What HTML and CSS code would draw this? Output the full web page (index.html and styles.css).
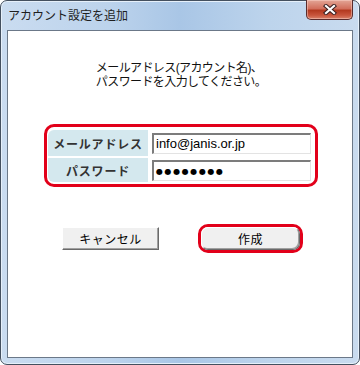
FILE: index.html
```html
<!DOCTYPE HTML>
<html>

<head>
    <meta charset="utf-8">
    <title>アカウント設定を追加</title>
    <link rel="stylesheet" href="styles.css">
</head>

<body>
<div class="window">
    <div class="titlebar">
        <span class="title">アカウント設定を追加</span>
        <a href="javascript:;" class="close">
            <svg width="14" height="11" viewBox="0 0 14 11">
                <path d="M3 2 L11 9 M11 2 L3 9" stroke="#3a2020" stroke-width="4.2" stroke-linecap="square"/>
                <path d="M3 2 L11 9 M11 2 L3 9" stroke="#fff" stroke-width="2.2" stroke-linecap="square"/>
            </svg>
        </a>
    </div>
    <div class="client">
        <p class="lead">メールアドレス(アカウント名)、<br>パスワードを入力してください。</p>

        <div class="account-box">
            <div class="row">
                <label class="cell-label">メールアドレス</label>
                <div class="cell-value">
                    <span class="field">info@janis.or.jp</span>
                </div>
            </div>
            <div class="row">
                <label class="cell-label">パスワード</label>
                <div class="cell-value">
                    <span class="field"><span class="dots">●●●●●●●●</span></span>
                </div>
            </div>
        </div>

        <div class="buttons">
            <button class="btn btn-cancel">キャンセル</button>
            <span class="ring">
                <button class="btn btn-create">作成</button>
            </span>
        </div>
    </div>
</div>
</body>

</html>
```

FILE: styles.css
```css
* {
    margin: 0;
    padding: 0;
    box-sizing: border-box;
}

html, body {
    width: 360px;
    height: 365px;
    background: #fff;
    overflow: hidden;
}

body {
    font-family: "Noto Sans CJK JP", "Liberation Sans", sans-serif;
    font-size: 12px;
    color: #000;
}

.window {
    width: 360px;
    height: 365px;
    display: flex;
    flex-direction: column;
    border: 1px solid #44505f;
    border-radius: 7px;
    background: linear-gradient(90deg, #cadcf0 0%, #bcd3ec 30%, #a9c6e6 50%, #bdd4ec 75%, #c9dbef 100%);
    padding: 0 6px 6px 6px;
    box-shadow: inset 0 0 0 1px #e6f0fa;
}

.titlebar {
    height: 29px;
    display: flex;
    justify-content: space-between;
    align-items: flex-start;
}

.title {
    font-size: 12px;
    line-height: 14px;
    color: #1e1e1e;
    margin-top: 7px;
    margin-left: 1px;
}

.close {
    display: flex;
    align-items: center;
    justify-content: center;
    width: 47px;
    height: 20px;
    margin-top: -1px;
    border: 1px solid #5a2c2c;
    border-top: none;
    border-radius: 0 0 5px 5px;
    background: linear-gradient(#e3a696 0%, #d26f5c 45%, #b33a20 55%, #c8553c 80%, #d8826a 100%);
    box-shadow: inset 0 0 0 1px rgba(255, 220, 210, 0.45);
}

.client {
    flex: 1;
    background: #fff;
    border: 1px solid #6b7888;
    display: flex;
    flex-direction: column;
}

.lead {
    width: fit-content;
    margin: 30px auto 0;
    font-family: "Liberation Sans", "Noto Sans CJK JP", sans-serif;
    font-size: 12px;
    line-height: 14px;
    letter-spacing: -0.6px;
    color: #111;
    padding-left: 2px;
}

.account-box {
    width: 274px;
    margin: 35px 0 0 36px;
    border: 3px solid #e2001a;
    border-radius: 10px;
    padding: 3px 4px 2px 1px;
    display: flex;
    flex-direction: column;
    gap: 2px;
}

.row {
    display: flex;
    gap: 2px;
}

.row:first-child {
    height: 26px;
}

.row:last-child {
    height: 24px;
}

.cell-label {
    width: 100px;
    background: #d4e8ee;
    display: flex;
    align-items: center;
    justify-content: center;
    font-weight: 700;
    font-size: 12px;
    color: #333;
    letter-spacing: 0.8px;
}

.row:first-child .cell-label {
    border-top-left-radius: 6px;
}

.row:last-child .cell-label {
    border-bottom-left-radius: 6px;
}

.cell-value {
    flex: 1;
    display: flex;
    align-items: center;
    padding-left: 2px;
}

.field {
    width: 159px;
    height: 21px;
    display: flex;
    align-items: center;
    padding-left: 2px;
    border-top: 2px solid #7c7c7c;
    border-left: 2px solid #7c7c7c;
    border-right: 1px solid #e3e3e3;
    border-bottom: 1px solid #e3e3e3;
    font-family: "Liberation Sans", Arial, sans-serif;
    font-size: 13px;
    color: #000;
}

.row:last-child .field {
    margin-top: 1px;
}

.dots {
    font-family: "DejaVu Sans", sans-serif;
    font-size: 8px;
    letter-spacing: 1.6px;
    padding-top: 1px;
}

.buttons {
    display: flex;
    align-items: center;
    margin: 37px 0 0 54px;
}

.btn {
    font-family: "Noto Sans CJK JP", sans-serif;
    font-size: 12px;
    color: #000;
    background: #f0f0f0;
    border: 1px solid #fff;
    border-right-color: #6a6a6a;
    border-bottom-color: #6a6a6a;
    box-shadow: inset -1px -1px 0 #a0a0a0;
    height: 23px;
    letter-spacing: 0.5px;
}

.btn-cancel {
    width: 97px;
}

.ring {
    display: flex;
    margin-left: 39px;
    border: 3px solid #e2001a;
    border-radius: 10px;
}

.btn-create {
    width: 99px;
    height: 23px;
    border-radius: 7px;
}
```
